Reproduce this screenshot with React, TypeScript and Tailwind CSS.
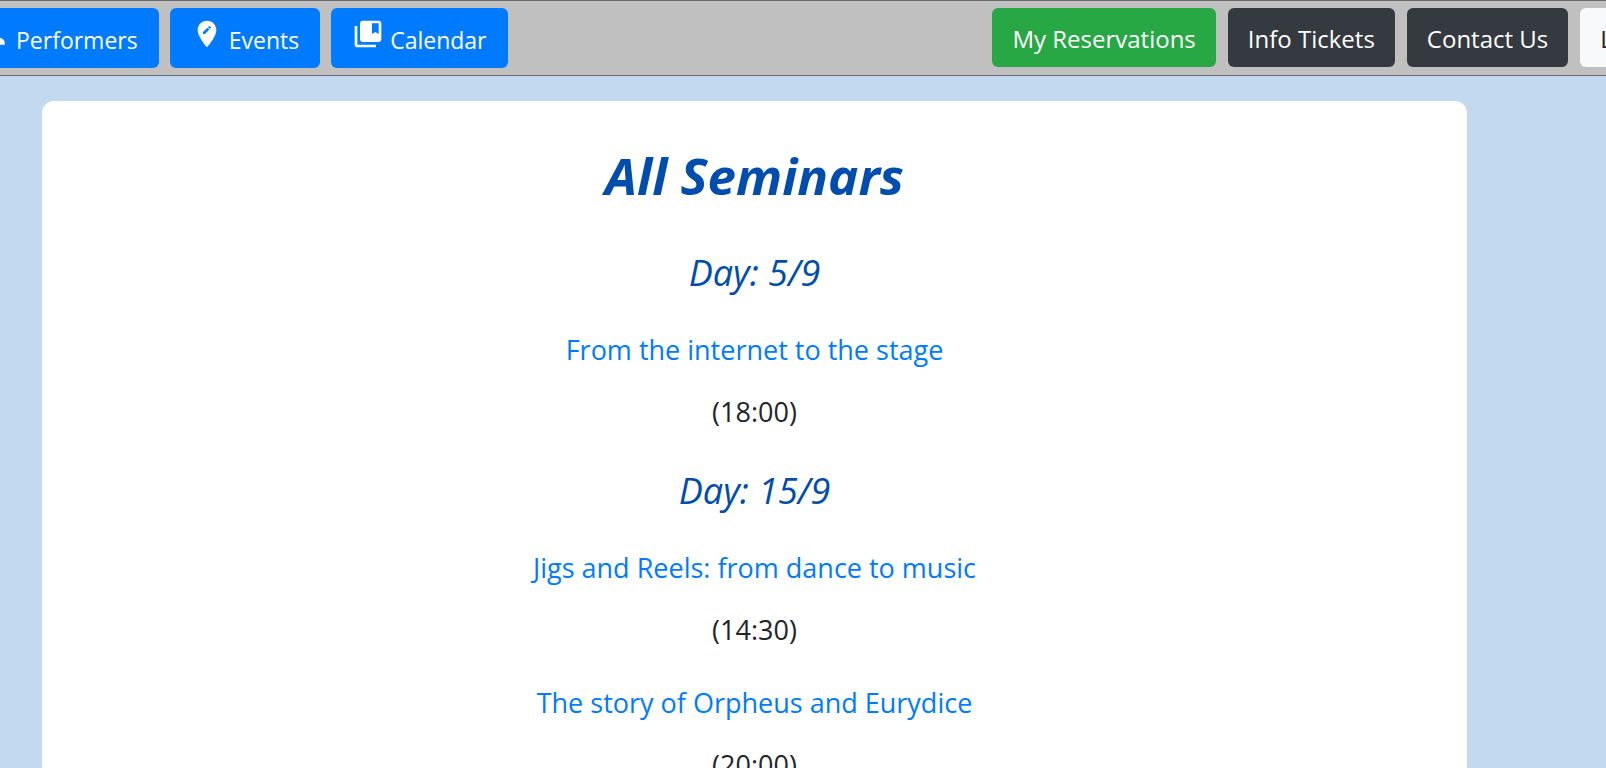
import type { ReactNode } from "react";
import { MdCollectionsBookmark, MdEditLocation, MdPerson } from "react-icons/md";

type Seminar = { title: string; time: string };
type Day = { date: string; seminars: Seminar[] };

const days: Day[] = [
  { date: "5/9", seminars: [{ title: "From the internet to the stage", time: "18:00" }] },
  {
    date: "15/9",
    seminars: [
      { title: "Jigs and Reels: from dance to music", time: "14:30" },
      { title: "The story of Orpheus and Eurydice", time: "20:00" },
    ],
  },
];

function NavButton({ icon, children }: { icon: ReactNode; children: ReactNode }) {
  return (
    <button className="flex h-[60px] shrink-0 items-center gap-[6px] rounded-md bg-[#007bff] px-[21px] text-[23px] text-white">
      <span className="pb-2">{icon}</span>
      <span className="pt-1">{children}</span>
    </button>
  );
}

function ActionButton({ color, children }: { color: string; children: ReactNode }) {
  return (
    <button className={`h-[59px] shrink-0 rounded-md px-5 pt-[2px] text-2xl ${color}`}>{children}</button>
  );
}

export default function App() {
  return (
    <div className="h-screen overflow-hidden bg-[#c3d9f0] font-['Open_Sans','Noto_Sans',sans-serif] text-[#212529]">
      <header className="overflow-hidden border-y border-[#6b6b6b] bg-[#c0c0c0]">
        <nav className="-mr-[75px] -ml-[43px] flex h-[74px] items-start justify-between pt-[7px] whitespace-nowrap">
          <div className="flex gap-[11px]">
            <NavButton icon={<MdPerson size={32} />}>Performers</NavButton>
            <NavButton icon={<MdEditLocation size={32} />}>Events</NavButton>
            <NavButton icon={<MdCollectionsBookmark size={32} />}>Calendar</NavButton>
          </div>
          <div className="flex gap-3">
            <ActionButton color="bg-[#28a745] text-white">My Reservations</ActionButton>
            <ActionButton color="bg-[#343a40] text-white">Info Tickets</ActionButton>
            <ActionButton color="bg-[#343a40] text-white">Contact Us</ActionButton>
            <ActionButton color="bg-[#f8f9fa] text-[#212529]">Login</ActionButton>
          </div>
        </nav>
      </header>
      <main className="mt-[25px] mr-[139px] ml-[42px] rounded-t-xl bg-white pt-[42px] text-center">
        <h1 className="mb-[7px] text-[51px] leading-[64px] font-bold text-[#004dad] italic">All Seminars</h1>
        {days.map((day) => (
          <section key={day.date} className="pt-[35px]">
            <h2 className="text-[36px] leading-[48px] text-[#004dad] italic">Day: {day.date}</h2>
            <div className="flex flex-col gap-[33px] pt-[33px]">
              {day.seminars.map((seminar) => (
                <div key={seminar.title} className="flex flex-col gap-[22px] text-[27px] leading-[40px]">
                  <p>
                    <a href="#" className="text-[#007bff]">{seminar.title}</a>
                  </p>
                  <p>({seminar.time})</p>
                </div>
              ))}
            </div>
          </section>
        ))}
      </main>
    </div>
  );
}
